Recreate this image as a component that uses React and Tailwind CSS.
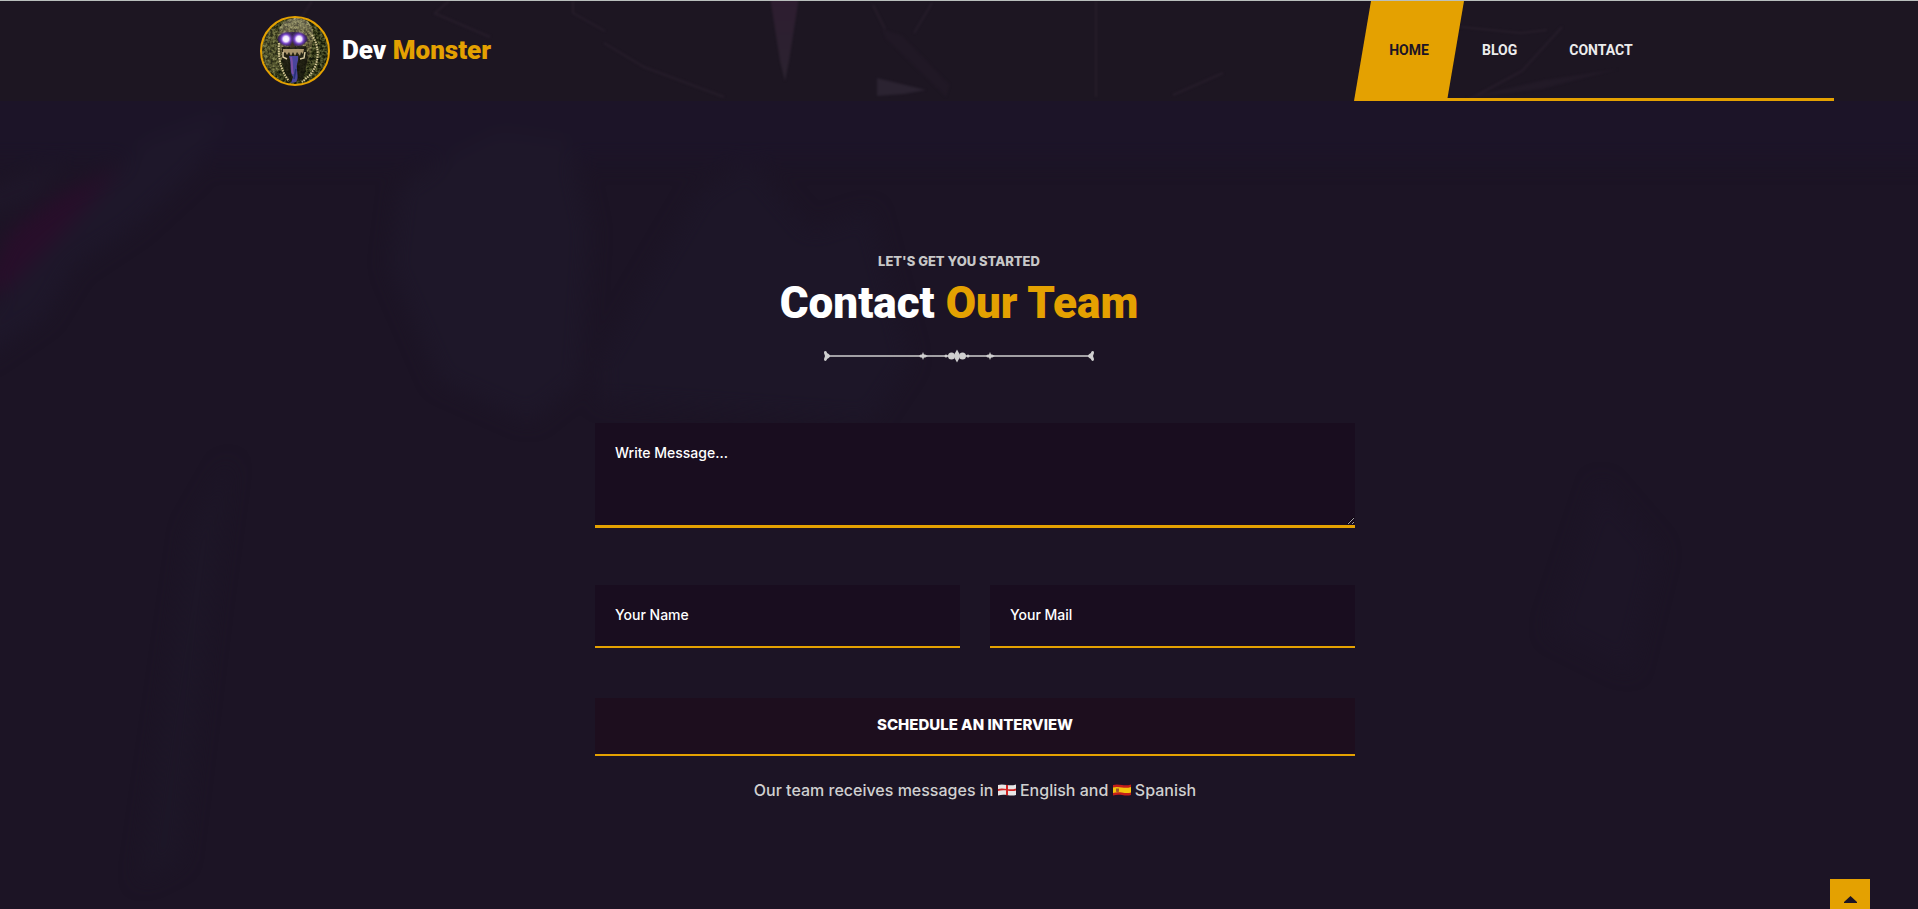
import React from "react";

function HeaderArt() {
  return (
    <svg className="absolute inset-0 h-full w-full" viewBox="0 0 1918 100" preserveAspectRatio="none" aria-hidden="true">
      <defs>
        <linearGradient id="shard" x1="0" y1="0" x2="0" y2="1">
          <stop offset="0" stopColor="#2e1d30" />
          <stop offset="1" stopColor="#2b2330" />
        </linearGradient>
        <filter id="haze" x="-5%" y="-20%" width="110%" height="140%" colorInterpolationFilters="sRGB">
          <feGaussianBlur stdDeviation="1" />
        </filter>
      </defs>
      <g filter="url(#haze)">
        <path d="M770-4h29l-10 64-4 20-5-20z" fill="url(#shard)" />
        <path d="M877 77l49 12-22 4-27 2z" fill="#2b2331" />
        <path d="M882 28l20 6 48 50-4 12-60-58z" fill="#201825" />
        <g fill="none" stroke="#261d2a" strokeWidth="2">
          <path d="M312 0l-10 16M434 12l56 24M435 12l14-12M573 0l0 12 32 18M604 42l40 24 80 30M932 2l-18 30M873 4l12 24M1096 0v96M1173 94l50-22M1461 26l60 6 26-3M1562 26l-40 44-52 28" />
        </g>
        <path d="M1466 97l78-18 74-11-76 20z" fill="#221a27" />
      </g>
    </svg>
  );
}

function PageArt() {
  return (
    <svg className="absolute inset-0 h-full w-full" viewBox="0 0 1918 808" preserveAspectRatio="none" aria-hidden="true">
      <defs>
        <filter id="soft" x="-20%" y="-20%" width="140%" height="140%" colorInterpolationFilters="sRGB">
          <feGaussianBlur stdDeviation="10" />
        </filter>
      </defs>
      <g filter="url(#soft)">
        <path d="M-40-40h1998v100H-40z" fill="#1c1428" />
        <path d="M-20 190l30-60 50-36 65-30-30 40-50 46-40 40z" fill="#280e2a" />
        <path d="M-20 94l50-20 34-14-28 34-56 22z" fill="#1f172a" />
        <path d="M-20 215l80-80 85-95 80-30-30 60-60 55-60 40-30 50-65 45z" fill="#1e172a" />
        <path d="M400 85l40-25 60-30 70 10 20 90-10 150-50 40-90-40-50-115z" fill="#1e1729" />
        <path d="M600 260l100-170 50-30 60 70 60-20 40 150-40 60-270-20z" fill="#1d1628" />
        <path d="M190 430l40-70-20 150-30 250-40 20z" fill="#1d1627" />
        <path d="M1600 380l60 70-30 120-80-40z" fill="#1d1527" />
      </g>
    </svg>
  );
}

function MonsterAvatar() {
  return (
    <svg className="h-[70px] w-[70px]" viewBox="0 0 70 70" aria-hidden="true">
      <defs>
        <clipPath id="face-clip">
          <circle cx="35" cy="35" r="34" />
        </clipPath>
        <radialGradient id="eye">
          <stop offset="0" stopColor="#ffffff" />
          <stop offset="0.34" stopColor="#f2e6ff" />
          <stop offset="0.58" stopColor="#7d4ccc" />
          <stop offset="1" stopColor="#43207c" stopOpacity="0" />
        </radialGradient>
        <linearGradient id="skull" x1="0" y1="0" x2="0" y2="1">
          <stop offset="0" stopColor="#8d8974" />
          <stop offset="0.5" stopColor="#5d553b" />
          <stop offset="1" stopColor="#15150c" />
        </linearGradient>
        <filter id="grain" x="0" y="0" width="100%" height="100%" colorInterpolationFilters="sRGB">
          <feTurbulence type="fractalNoise" baseFrequency="0.38" numOctaves="3" seed="8" />
          <feColorMatrix values="1.9 0 0 0 -0.55  1.9 0 0 0 -0.55  1.3 0 0 0 -0.45  0 0 0 0 1" />
        </filter>
      </defs>
      <g clipPath="url(#face-clip)">
        <path d="M0 0h70v70H0z" fill="#1d2411" />
        <path d="M0 14l18-2 4 18-2 24L0 62z" fill="#43452a" />
        <path d="M20 26C16 12 22 3 36 2c13 0 19 9 17 22l-3 16-6 16-16 4-7-18z" fill="url(#skull)" />
        <path d="M0 0h70v70H0z" filter="url(#grain)" opacity="0.36" />
        <path d="M22 31l24-1 2 12-5 22-15 3-6-22z" fill="#15150d" opacity="0.8" />
        <ellipse cx="32.500" cy="23" rx="15" ry="7" fill="#2f1a55" opacity="0.85" />
        <path d="M32 23l3 8-5 1z" fill="#3f3423" />
        <circle cx="26" cy="23" r="8" fill="url(#eye)" />
        <circle cx="39" cy="23" r="8" fill="url(#eye)" />
        <path d="M23 33h21l-1 5-2-2-1 4-3-4-2 4-2-4-2 4-2-4-2 3-2-3-2 2z" fill="#a8946b" />
        <path d="M23 36v5l4 2M45 36l-1 6-4 1" fill="none" stroke="#d5c79d" strokeWidth="1.5" />
        <path d="M29 40h9c1 5-2 8-1 13 0 5 2 9-1 13l-5 1 2-6c-4-6-1-12-4-21z" fill="#4a459c" />
        <path d="M31 41c2 7 0 12 2 17" fill="none" stroke="#7c50a4" strokeWidth="2" />
        <path d="M36 53l-2 10" stroke="#263276" strokeWidth="1.5" />
        <g fill="none" stroke="#d6c795" strokeWidth="2" strokeDasharray="1.5 1">
          <path d="M19 27c-1 13 1 27 10 38" />
          <path d="M52 19c8 12 8 29-3 41l-7 6" />
        </g>
      </g>
      <circle cx="35" cy="35" r="34" fill="none" stroke="#e4a101" strokeWidth="2" />
    </svg>
  );
}

function Divider() {
  return (
    <svg className="h-[14px] w-[270px]" viewBox="0 0 270 14" fill="#cfcfcf" aria-hidden="true">
      <path d="M4 6.3h262v1.4H4z" />
      <path d="M0 4c0-3 3-2 3 0 2 1 3 2 3 3s-1 2-3 3c0 2-3 3-3 0l1-3zM270 4c0-3-3-2-3 0-2 1-3 2-3 3s1 2 3 3c0 2 3 3 3 0l-1-3z" />
      <path d="M95 7l3-1.500 1-2.500 1 2.500L104 7l-4 1.500-1 2.500-1-2.500zM162 7l3-1.500 1-2.500 1 2.500L171 7l-4 1.500-1 2.500-1-2.500z" />
      <circle cx="97" cy="7" r="1.500" />
      <circle cx="101" cy="7" r="1.500" />
      <circle cx="164" cy="7" r="1.500" />
      <circle cx="168" cy="7" r="1.500" />
      <circle cx="122" cy="7" r="1.500" />
      <circle cx="144" cy="7" r="1.500" />
      <circle cx="127.500" cy="7" r="3.500" />
      <circle cx="138.500" cy="7" r="3.500" />
      <path d="M133 0.500l2.500 4.500v4L133 13.500 130.500 9V5z" />
    </svg>
  );
}

function EnglandFlag() {
  return (
    <svg className="inline-block h-3 w-[18px] align-baseline" viewBox="0 0 18 12" role="img" aria-label="England">
      <path d="M0 1c3-1 6-.5 9 0s6 .5 9-.5v10.500c-3 1-6 .5-9 0s-6-.5-9 .5z" fill="#e6e6e6" />
      <path d="M8 1h2v10.200H8zM0 5c3-1 6-.5 9 0s6 .5 9-.5v2c-3 1-6 .5-9 0S3 6 0 7z" fill="#cf2222" />
    </svg>
  );
}

function SpainFlag() {
  return (
    <svg className="inline-block h-3 w-[18px] align-baseline" viewBox="0 0 18 12" role="img" aria-label="Spain">
      <path d="M0 1c3-1 6-.5 9 0s6 .5 9-.5v10.500c-3 1-6 .5-9 0s-6-.5-9 .5z" fill="#c41e1a" />
      <path d="M0 3.500c3-1 6-.5 9 0s6 .5 9-.5v5.500c-3 1-6 .5-9 0s-6-.5-9 .5z" fill="#f3c50d" />
      <path d="M3 4.500h3v3l-1.500 1L3 7.500z" fill="#a5542a" />
    </svg>
  );
}

const fieldClass =
  "block w-full border-[#e4a101] bg-[#190d1f] px-5 font-medium text-white outline-none placeholder:text-white placeholder:opacity-100";

export default function App() {
  return (
    <div className="flex h-screen min-h-screen flex-col overflow-hidden border-t border-[#b9bfbd] bg-[#1c1425] font-['Inter',sans-serif] text-white">
      <header className="relative h-[100px] shrink-0 bg-[#1d1622]">
        <HeaderArt />
        <div className="relative flex h-full justify-between pr-[84px] pl-[260px]">
          <a href="#home" className="flex items-center gap-3">
            <MonsterAvatar />
            <span className="pb-0.5 font-['Roboto',sans-serif] text-[26px] font-black whitespace-nowrap">
              Dev <span className="text-[#e4a101]">Monster</span>
            </span>
          </a>
          <nav className="relative flex w-[480px] items-stretch font-['Roboto',sans-serif] text-sm font-bold text-[#ececec]">
            <a
              href="#home"
              className="flex w-[110px] items-center justify-center bg-[#e4a101] pb-0.5 text-[#1c1425] [clip-path:polygon(17px_0,100%_0,calc(100%-17px)_100%,0_100%)]"
            >
              HOME
            </a>
            <a href="#blog" className="flex items-center pb-0.5 pl-[18px]">BLOG</a>
            <a href="#contact" className="flex items-center pb-0.5 pl-[52px]">CONTACT</a>
            <div className="absolute right-0 bottom-0 left-4 h-[3px] bg-[#e4a101]" />
          </nav>
        </div>
      </header>

      <main className="relative flex-1">
        <PageArt />
        <div className="relative flex flex-col items-center pt-[150px]">
          <p className="text-[13px] leading-5 font-extrabold text-[#c8c8c8]">LET'S GET YOU STARTED</p>
          <h1 className="mt-2 font-['Roboto',sans-serif] text-[44px] leading-[48px] font-black">
            Contact <span className="text-[#e4a101]">Our Team</span>
          </h1>
          <div className="mt-[22px]">
            <Divider />
          </div>
          <form className="mt-[60px] w-full max-w-[792px] pl-8" onSubmit={(e) => e.preventDefault()}>
            <textarea
              aria-label="Write Message"
              placeholder="Write Message..."
              className={`${fieldClass} h-[105px] resize-y border-b-[3px] pt-5 text-sm`}
            />
            <div className="mt-[57px] grid grid-cols-2 gap-[30px]">
              <input type="text" aria-label="Your Name" placeholder="Your Name" className={`${fieldClass} h-[63px] border-b-2 pb-0.5 text-sm`} />
              <input type="email" aria-label="Your Mail" placeholder="Your Mail" className={`${fieldClass} h-[63px] border-b-2 pb-0.5 text-sm`} />
            </div>
            <button type="submit" className="mt-[50px] h-[58px] w-full border-b-2 border-[#e4a101] bg-[#1d0e1e] pb-0.5 text-[15px] font-extrabold text-white">
              SCHEDULE AN INTERVIEW
            </button>
            <p className="mt-[22px] text-center text-base leading-6 font-medium text-[#d0d0d0]">
              Our team receives messages in <EnglandFlag /> English and <SpainFlag /> Spanish
            </p>
          </form>
        </div>
      </main>

      <button type="button" aria-label="Back to top" className="fixed right-12 -bottom-[10px] flex h-10 w-10 items-center justify-center bg-[#e4a101]">
        <svg className="h-[7px] w-[13px]" viewBox="0 0 13 7" fill="#1c1425" aria-hidden="true">
          <path d="M6.500 0L13 6v1H0V6z" />
        </svg>
      </button>
    </div>
  );
}
